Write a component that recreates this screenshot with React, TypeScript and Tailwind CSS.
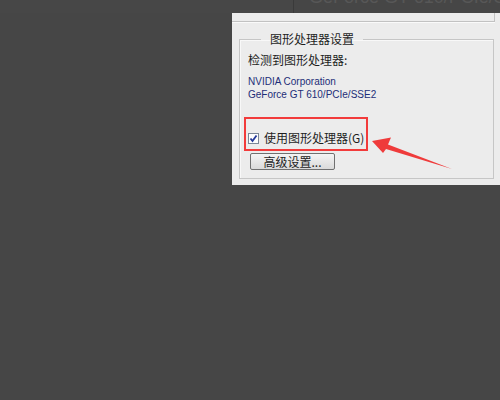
export default function App() {
  return (
    <div className="relative w-[500px] h-[400px] overflow-hidden bg-[#464646] font-['Liberation_Sans','Noto_Sans_CJK_SC',sans-serif]">
      {/* top strip behind the dialog */}
      <div className="flex h-[13px]">
        <div className="w-[294px] border-r border-[#3a3a3a] bg-[#474747]" />
        <div className="flex-1 overflow-hidden pl-[15px]">
          <div className="-mt-[12px] whitespace-nowrap text-[18px] leading-[18px] text-[#575757]">GeForce GT 610/PCIe/SSE2</div>
        </div>
      </div>

      {/* dialog panel */}
      <div className="ml-[232px] w-[268px] h-[172px] bg-[#ececec] flex flex-col">
        <div className="h-[9px] mr-[5px] border-b border-r border-[#c2c2c2] shadow-[0_1px_0_#fafafa]" />
        <fieldset className="mt-[9px] ml-[7px] mr-[6px] h-[148px] border border-[#c6c6c6] shadow-[inset_1px_1px_0_#f8f8f8] pl-[8px] pt-[5px]">
          <legend className="ml-[13px] px-[9px] text-[12px] leading-[16px] text-[#1e1e1e] font-['Noto_Sans_CJK_SC',sans-serif]">
            图形处理器设置
          </legend>
          <div className="text-[12px] leading-[16px] text-[#1e1e1e] font-['Noto_Sans_CJK_SC',sans-serif]">检测到图形处理器:</div>
          <div className="mt-[7px] text-[10px] leading-[13px] text-[#1d2e78]">
            <div>NVIDIA Corporation</div>
            <div>GeForce GT 610/PCIe/SSE2</div>
          </div>
          <div className="mt-[29px] flex items-center gap-[5px] h-[16px]">
            <svg width="11" height="11" viewBox="0 0 11 11">
              <rect x="0.5" y="0.5" width="10" height="10" fill="#fdfdfd" stroke="#7b8797" />
              <path d="M2.5 5.5 L4.5 8 L8.5 2.5" fill="none" stroke="#24399a" strokeWidth="1.8" />
            </svg>
            <span className="text-[12px] leading-[16px] text-[#1e1e1e] font-['Noto_Sans_CJK_SC',sans-serif]">使用图形处理器(G)</span>
          </div>
          <button className="mt-[7px] ml-[2px] w-[85px] h-[17px] rounded-[2px] border border-[#707070] bg-gradient-to-b from-[#f4f4f4] to-[#dadada] text-[12px] leading-[15px] text-[#1e1e1e] font-['Noto_Sans_CJK_SC',sans-serif]">
            高级设置...
          </button>
        </fieldset>
      </div>

      {/* annotation */}
      <div className="absolute left-[244px] top-[117px] w-[124px] h-[34px] border-2 border-[#f23b3b]" />
      <svg className="absolute left-0 top-0" width="500" height="400">
        <polygon points="372,141 391,137.5 388,144.5 452,169 386,149 383,153" fill="#ef3b3b" />
      </svg>
    </div>
  )
}
